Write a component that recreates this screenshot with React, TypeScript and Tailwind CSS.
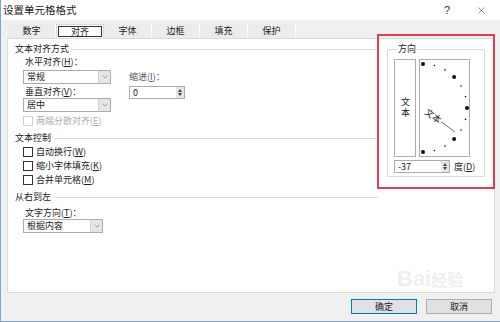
import { ChevronDown, X } from 'lucide-react';

const tabs = ['数字', '对齐', '字体', '边框', '填充', '保护'];

function GroupHeader({ label, className = '' }: { label: string; className?: string }) {
  return (
    <div className={`flex items-center h-[12px] leading-[12px] ${className}`}>
      <span>{label}</span>
      <div className="flex-1 h-px bg-[#dcdcdc] ml-[3px]" />
    </div>
  );
}

function Select({ value, width }: { value: string; width: string }) {
  return (
    <div className={`${width} h-[14px] border border-[#acacac] bg-white flex`}>
      <span className="flex-1 pl-[3px] leading-[12px]">{value}</span>
      <div className="w-[12px] bg-[#e5e5e5] border-l border-[#d0d0d0] flex items-center justify-center">
        <ChevronDown size={8} strokeWidth={1.5} className="text-[#555]" />
      </div>
    </div>
  );
}

function Spinner({ value, width }: { value: string; width: string }) {
  return (
    <div className={`${width} h-[13px] border border-[#acacac] bg-white flex`}>
      <span className="flex-1 pl-[3px] leading-[11px]">{value}</span>
      <div className="w-[8px] bg-[#e5e5e5] flex flex-col items-center justify-center gap-px">
        <span className="w-0 h-0 border-x-[2.5px] border-x-transparent border-b-[3px] border-b-[#444]" />
        <span className="w-0 h-0 border-x-[2.5px] border-x-transparent border-t-[3px] border-t-[#444]" />
      </div>
    </div>
  );
}

function Check({ label, hotkey, disabled = false }: { label: string; hotkey: string; disabled?: boolean }) {
  return (
    <div className={`flex items-center h-[12px] leading-[12px] ${disabled ? 'text-[#b0b0b0]' : ''}`}>
      <span className={`w-[10px] h-[10px] border bg-white ${disabled ? 'border-[#d0d0d0]' : 'border-[#333]'}`} />
      <span className="ml-[3px]">
        {label}(<u>{hotkey}</u>)
      </span>
    </div>
  );
}

function Dial() {
  const cx = 3;
  const cy = 48;
  const r = 44;
  const dots = [];
  for (let a = 90; a >= -90; a -= 15) {
    const rad = (a * Math.PI) / 180;
    const big = a % 45 === 0;
    dots.push(
      <circle key={a} cx={cx + r * Math.cos(rad)} cy={cy - r * Math.sin(rad)} r={big ? 2 : 0.8} fill="#111" />
    );
  }
  return (
    <svg width="49" height="96" viewBox="0 0 49 96">
      {dots}
      <g transform={`rotate(37 ${cx} ${cy})`}>
        <text x={cx + 4} y={cy + 3.5} fontSize="9" fill="#222" fontFamily="'Noto Sans CJK SC', sans-serif">
          文本
        </text>
        <line x1={cx + 23} y1={cy} x2={cx + 40} y2={cy} stroke="#555" strokeWidth="0.8" />
      </g>
    </svg>
  );
}

export default function App() {
  return (
    <div className="relative w-[500px] h-[322px] bg-white border-l border-b border-[#7ea4cf] flex flex-col text-[9px] text-[#1a1a1a] font-['Noto_Sans_CJK_SC','Noto_Sans',sans-serif] overflow-hidden">
      {/* 标题栏 */}
      <div className="h-[20px] flex items-center pl-[2px] shrink-0">
        <span className="text-[10.5px] leading-[12px]">设置单元格格式</span>
        <span className="ml-auto mr-[26px] text-[11px] text-[#333] font-['Liberation_Sans',sans-serif]">?</span>
        <X size={11} strokeWidth={1} className="mr-[13px] text-[#222]" />
      </div>

      <div className="flex-1 bg-[#f0f0f0] flex flex-col pl-[6px] pr-[5px]">
        {/* 标签页 */}
        <div className="flex mt-[4px] h-[14px] pl-[1px]">
          {tabs.map((t) =>
            t === '对齐' ? (
              <div key={t} className="w-[48px] h-[14px] bg-white flex items-center justify-center border-x border-t border-[#d9d9d9]">
                <div className="w-[44px] h-[11px] border border-[#333] flex items-center justify-center leading-[10px]">
                  {t}
                </div>
              </div>
            ) : (
              <div key={t} className="w-[48px] h-[14px] flex items-center justify-center border-r border-[#fafafa] bg-[#ececec] leading-[12px]">
                {t}
              </div>
            )
          )}
        </div>

        {/* 内容面板 */}
        <div className="h-[255px] bg-white border border-[#dadada] flex">
          <div className="w-[370px] pl-[7px] pt-[4px]">
            <GroupHeader label="文本对齐方式" />
            <div className="pl-[10px] mt-[1px] h-[12px] leading-[12px]">
              水平对齐(<u>H</u>)：
            </div>
            <div className="flex pl-[8px] mt-[2px]">
              <div>
                <Select value="常规" width="w-[88px]" />
                <div className="pl-[2px] mt-[2px] h-[12px] leading-[12px]">
                  垂直对齐(<u>V</u>)：
                </div>
                <Select value="居中" width="w-[88px]" />
              </div>
              <div className="ml-[18px]">
                <div className="h-[12px] leading-[12px] text-[#555] mt-[1px]">缩进(<u>I</u>)：</div>
                <div className="mt-[3px]">
                  <Spinner value="0" width="w-[56px]" />
                </div>
              </div>
            </div>
            <div className="pl-[8px] mt-[3px]">
              <Check label="两端分散对齐" hotkey="E" disabled />
            </div>
            <GroupHeader label="文本控制" className="mt-[5px]" />
            <div className="pl-[8px] mt-[2px] flex flex-col gap-[2px]">
              <Check label="自动换行" hotkey="W" />
              <Check label="缩小字体填充" hotkey="K" />
              <Check label="合并单元格" hotkey="M" />
            </div>
            <GroupHeader label="从右到左" className="mt-[5px]" />
            <div className="pl-[10px] mt-[4px] h-[12px] leading-[12px]">
              文字方向(<u>T</u>)：
            </div>
            <div className="pl-[8px]">
              <Select value="根据内容" width="w-[80px]" />
            </div>
          </div>

          {/* 方向 */}
          <div className="flex-1 pl-[9px] pt-[4px]">
            <fieldset className="w-[98px] h-[134px] border border-[#dcdcdc] pl-[6px]">
              <legend className="ml-[3px] px-[1px] leading-[12px]">方向</legend>
              <div className="flex mt-[4px]">
                <div className="w-[22px] h-[98px] border border-[#acacac] flex items-center justify-center">
                  <span className="[writing-mode:vertical-rl] tracking-[2px] leading-[12px]">文本</span>
                </div>
                <div className="w-[51px] h-[98px] ml-[3px] border border-[#acacac]">
                  <Dial />
                </div>
              </div>
              <div className="flex items-center mt-[3px]">
                <Spinner value="-37" width="w-[56px]" />
                <span className="ml-[4px] leading-[12px]">
                  度(<u>D</u>)
                </span>
              </div>
            </fieldset>
          </div>
        </div>

        {/* 按钮 */}
        <div className="flex justify-end mt-[6px] gap-[9px] pr-[3px]">
          <button className="w-[66px] h-[15px] bg-[#e1e1e1] border border-[#0078d7] leading-[12px]">确定</button>
          <button className="w-[66px] h-[15px] bg-[#e1e1e1] border border-[#adadad] leading-[12px]">取消</button>
        </div>
      </div>

      {/* 水印 */}
      <div className="absolute left-[396px] top-[262px] text-[22px] font-bold text-[#e8e8e8]/70 font-['Liberation_Sans',sans-serif] pointer-events-none">
        Bai<span className="text-[16px] font-['Noto_Sans_CJK_SC',sans-serif]">经验</span>
      </div>

      {/* 红框标注 */}
      <div className="absolute left-[376px] top-[34px] w-[118px] h-[155px] border-2 border-[#e53a4f] pointer-events-none" />
    </div>
  );
}
